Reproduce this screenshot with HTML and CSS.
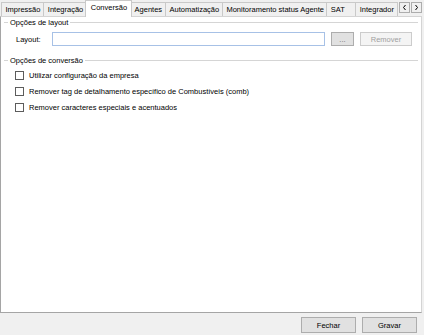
FILE: index.html
```html
<!DOCTYPE html>
<html lang="pt-BR">
<head>
    <meta charset="UTF-8">
    <title>Configurações</title>
    <link rel="stylesheet" href="styles.css">
</head>
<body>
    <div class="window">
        <div class="tabbar">
            <div class="tabs">
                <div class="tab">Impressão</div>
                <div class="tab">Integração</div>
                <div class="tab active">Conversão</div>
                <div class="tab">Agentes</div>
                <div class="tab">Automatização</div>
                <div class="tab">Monitoramento status Agente</div>
                <div class="tab">SAT</div>
                <div class="tab">Integrador</div>
            </div>
            <div class="scroller">
                <span class="arrow"><svg width="5" height="7" viewBox="0 0 5 7"><polyline points="3.5,1 1.5,3.5 3.5,6" fill="none" stroke="#000" stroke-width="1"/></svg></span>
                <span class="arrow"><svg width="5" height="7" viewBox="0 0 5 7"><polyline points="1.5,1 3.5,3.5 1.5,6" fill="none" stroke="#000" stroke-width="1"/></svg></span>
            </div>
        </div>

        <div class="page">
            <div class="legend"><span>Opções de layout</span></div>
            <div class="layout-row">
                <label class="field-label">Layout:</label>
                <div class="textbox"></div>
                <button class="btn btn-dots">...</button>
                <button class="btn btn-remove" disabled>Remover</button>
            </div>

            <div class="legend legend-conv"><span>Opções de conversão</span></div>
            <div class="checks">
                <label class="check"><span class="box"></span>Utilizar configuração da empresa</label>
                <label class="check"><span class="box"></span>Remover tag de detalhamento específico de Combustíveis (comb)</label>
                <label class="check"><span class="box"></span>Remover caracteres especiais e acentuados</label>
            </div>
        </div>

        <div class="footer">
            <button class="btn btn-footer">Fechar</button>
            <button class="btn btn-footer">Gravar</button>
        </div>
    </div>
</body>
</html>
```

FILE: styles.css
```css
body {
    margin: 0;
    background-color: #f0f0f0;
    font-family: "Liberation Sans", Arial, sans-serif;
    font-size: 7.5px;
    color: #000;
}

.window {
    width: 424px;
    height: 335px;
    display: flex;
    flex-direction: column;
}

/* tab strip */
.tabbar {
    height: 17px;
    display: flex;
    position: relative;
    z-index: 2;
}

.tabs {
    flex: 1;
    display: flex;
    align-items: flex-start;
    padding-left: 1px;
    overflow: hidden;
    min-width: 0;
}

.tab {
    box-sizing: border-box;
    height: 14px;
    margin-top: 2px;
    margin-left: -1px;
    min-width: 30px;
    padding: 0 3.4px;
    line-height: 13px;
    white-space: nowrap;
    border: 1px solid #c9c9c9;
    border-bottom: none;
    background-color: #f0f0f0;
}

.tab:first-child {
    margin-left: 0;
}

.tab.active {
    height: 17px;
    margin-top: 0;
    margin-left: -2px;
    margin-right: -1px;
    padding: 0 4.5px;
    line-height: 14px;
    background-color: #fff;
    position: relative;
    z-index: 1;
}

.scroller {
    display: flex;
    gap: 1px;
    margin-top: 2px;
    padding-left: 1px;
    padding-right: 2px;
}

.arrow {
    box-sizing: border-box;
    width: 11px;
    height: 11px;
    border: 1px solid #adadad;
    background-color: #f0f0f0;
    display: flex;
    align-items: center;
    justify-content: center;
}

/* tab page */
.page {
    flex: 1;
    margin-top: -1px;
    margin-right: 2px;
    padding-top: 1px;
    background-color: #fff;
    border: 1px solid #d4d4d4;
    border-left-color: #a5a5a5;
    border-bottom-color: #a5a5a5;
}

.legend {
    height: 9px;
    margin: 0 3px;
    display: flex;
    align-items: center;
    line-height: 9px;
}

.legend::before {
    content: "";
    width: 4px;
    border-top: 1px solid #d5d5d5;
}

.legend::after {
    content: "";
    flex: 1;
    border-top: 1px solid #d5d5d5;
}

.legend span {
    padding: 0 2px;
}

.legend-conv {
    margin-top: 10px;
}

.layout-row {
    display: flex;
    align-items: center;
    margin-top: 5px;
    padding-left: 15px;
}

.field-label {
    width: 36px;
}

.textbox {
    box-sizing: border-box;
    width: 273px;
    height: 14px;
    border: 1px solid #a7c1e6;
    background-color: #fff;
}

.btn {
    box-sizing: border-box;
    height: 14px;
    padding: 0;
    font-family: inherit;
    font-size: 7.5px;
    color: #000;
    background-color: #e1e1e1;
    border: 1px solid #adadad;
}

.btn-dots {
    width: 23px;
    margin-left: 6px;
    color: #6d6d6d;
}

.btn-remove {
    width: 52px;
    margin-left: 6px;
    color: #a0a0a0;
    background-color: #f4f4f4;
    border-color: #cccccc;
}

.checks {
    margin-top: 2px;
    padding-left: 14px;
}

.check {
    height: 16px;
    display: flex;
    align-items: center;
}

.box {
    box-sizing: border-box;
    width: 9px;
    height: 9px;
    margin-right: 5px;
    border: 1px solid #5c5c5c;
    background-color: #fff;
}

/* bottom buttons */
.footer {
    height: 22px;
    display: flex;
    justify-content: flex-end;
    gap: 6px;
    padding-top: 4px;
    padding-right: 7px;
    box-sizing: border-box;
}

.btn-footer {
    width: 55px;
    height: 16px;
}
```
